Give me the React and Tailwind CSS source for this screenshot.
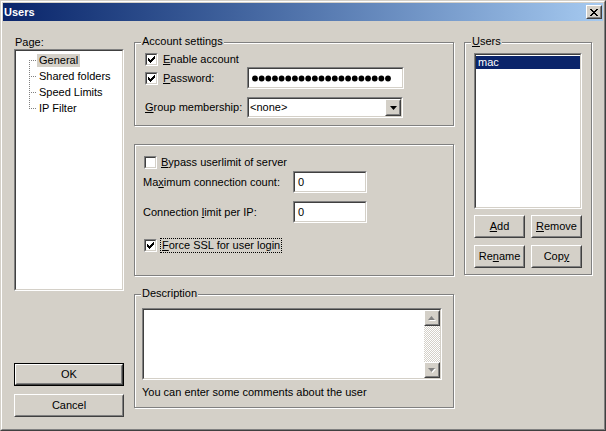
const face = "font-['Liberation_Sans',Arial,sans-serif]";

function Sunken({ className = "", innerClassName = "", children }) {
  return (
    <div className={`border border-t-[#808080] border-l-[#808080] border-b-white border-r-white ${className}`}>
      <div className={`h-full w-full border border-t-[#404040] border-l-[#404040] border-b-[#d4d0c8] border-r-[#d4d0c8] bg-white ${innerClassName}`}>
        {children}
      </div>
    </div>
  );
}

function Raised({ className = "", children }) {
  return (
    <div className={`border border-t-white border-l-white border-b-[#404040] border-r-[#404040] bg-[#d4d0c8] ${className}`}>
      <div className="flex h-full w-full items-center justify-center border border-t-[#d4d0c8] border-l-[#d4d0c8] border-b-[#808080] border-r-[#808080]">
        {children}
      </div>
    </div>
  );
}

function Button({ children, className = "", isDefault = false }) {
  if (isDefault) {
    return (
      <div className={`border border-black ${className}`}>
        <Raised className="h-full w-full">{children}</Raised>
      </div>
    );
  }
  return <Raised className={className}>{children}</Raised>;
}

function CheckMark() {
  const starts = [2, 3, 4, 3, 2, 1, 0];
  return (
    <svg width="7" height="7" viewBox="0 0 7 7" shapeRendering="crispEdges">
      {starts.map((y, x) => (
        <rect key={x} x={x} y={y} width="1" height="3" fill="#000" />
      ))}
    </svg>
  );
}

function Check({ checked }) {
  return (
    <span className="block h-[13px] w-[13px] shrink-0 border border-t-[#808080] border-l-[#808080] border-b-white border-r-white">
      <span className="flex h-full w-full items-center justify-center border border-t-[#404040] border-l-[#404040] border-b-[#d4d0c8] border-r-[#d4d0c8] bg-white">
        {checked && <CheckMark />}
      </span>
    </span>
  );
}

function Group({ label, className = "", children }) {
  return (
    <div className={`relative border border-[#808080] shadow-[1px_1px_0_#fff,inset_1px_1px_0_#fff] ${className}`}>
      {label && (
        <span className="absolute -top-[8px] left-[6px] bg-[#d4d0c8] px-px leading-[13px]">{label}</span>
      )}
      {children}
    </div>
  );
}

function Arrow({ dir = "down", disabled = false }) {
  const pts = dir === "down" ? "0,0 7,0 3.5,4" : "0,4 7,4 3.5,0";
  if (disabled) {
    return (
      <svg width="8" height="5" viewBox="0 0 8 5">
        <polygon points={pts} fill="#fff" transform="translate(1,1)" />
        <polygon points={pts} fill="#808080" />
      </svg>
    );
  }
  return (
    <svg width="7" height="4" viewBox="0 0 7 4">
      <polygon points={pts} fill="#000" />
    </svg>
  );
}

function TreeLines({ index, count }) {
  const dots = [];
  const y0 = index === 0 ? 8 : 0;
  const y1 = index === count - 1 ? 8 : 16;
  for (let y = y0; y <= y1 && y < 16; y += 2) dots.push([13, y]);
  for (let x = 15; x <= 20; x += 2) dots.push([x, 8]);
  return (
    <svg width="21" height="16" viewBox="0 0 21 16" shapeRendering="crispEdges" className="shrink-0">
      {dots.map(([x, y]) => (
        <rect key={`${x}-${y}`} x={x} y={y} width="1" height="1" fill="#808080" />
      ))}
    </svg>
  );
}

function CloseGlyph() {
  const rows = ["XX....XX", ".XX..XX.", "..XXXX..", "...XX...", "..XXXX..", ".XX..XX.", "XX....XX"];
  return (
    <svg width="8" height="7" viewBox="0 0 8 7" shapeRendering="crispEdges">
      {rows.flatMap((row, y) =>
        row.split("").map((c, x) => (c === "X" ? <rect key={`${x}-${y}`} x={x} y={y} width="1" height="1" fill="#000" /> : null))
      )}
    </svg>
  );
}

const pages = ["General", "Shared folders", "Speed Limits", "IP Filter"];

export default function App() {
  return (
    <div className={`h-[431px] w-[606px] border border-t-[#d4d0c8] border-l-[#d4d0c8] border-b-[#404040] border-r-[#404040] bg-[#d4d0c8] text-[11px] leading-[13px] text-black ${face}`}>
      <div className="flex h-full flex-col border border-t-white border-l-white border-b-[#808080] border-r-[#808080] p-px">
        {/* title bar */}
        <div className="flex h-[18px] shrink-0 items-center bg-gradient-to-r from-[#0a246a] to-[#a6caf0] pl-px pr-px">
          <span className="flex-1 font-bold text-white">Users</span>
          <Raised className="h-[14px] w-[16px]">
            <CloseGlyph />
          </Raised>
        </div>

        <div className="flex flex-1 gap-[10px] px-[11px] pb-[11px]">
          {/* left column */}
          <div className="flex w-[110px] flex-col">
            <div className="mt-[15px] h-[13px] pl-px">Page:</div>
            <Sunken className="h-[242px] w-[110px]" innerClassName="pt-px">
              {pages.map((p, i) => (
                <div key={p} className="flex h-[16px] items-center">
                  <TreeLines index={i} count={pages.length} />
                  <span className={`h-[13px] whitespace-nowrap px-[2px] ${i === 0 ? "bg-[#d4d0c8]" : ""}`}>{p}</span>
                </div>
              ))}
            </Sunken>
            <Button isDefault className="mt-auto h-[23px] w-[110px]">OK</Button>
            <Button className="mt-[8px] h-[23px] w-[110px]">Cancel</Button>
          </div>

          {/* middle column */}
          <div className="flex w-[320px] flex-col">
            <Group label="Account settings" className="mt-[21px] h-[84px] pl-[10px] pt-[8px]">
              <div className="flex h-[16px] items-center">
                <Check checked />
                <span className="ml-[5px]"><span className="underline">E</span>nable account</span>
              </div>
              <div className="flex h-[22px] items-center">
                <div className="flex w-[102px] items-center">
                  <Check checked />
                  <span className="ml-[5px]"><span className="underline">P</span>assword:</span>
                </div>
                <Sunken className="h-[22px] w-[157px]" innerClassName="flex items-center pl-[3px]">
                  <svg width="142" height="7" viewBox="0 0 142 7">
                    {Array.from({ length: 21 }).map((_, i) => (
                      <circle key={i} cx={3 + i * 6.65} cy="3.5" r="2.9" fill="#000" />
                    ))}
                  </svg>
                </Sunken>
              </div>
              <div className="mt-[8px] flex h-[21px] items-center">
                <span className="w-[102px]"><span className="underline">G</span>roup membership:</span>
                <Sunken className="h-[21px] w-[156px]" innerClassName="flex items-center">
                  <span className="flex-1 pl-px">&lt;none&gt;</span>
                  <Raised className="h-full w-[16px]">
                    <Arrow dir="down" />
                  </Raised>
                </Sunken>
              </div>
            </Group>

            <Group className="mt-[18px] h-[132px] pl-[8px] pt-[11px]">
              <div className="flex h-[13px] items-center pl-px">
                <Check />
                <span className="ml-[4px]"><span className="underline">B</span>ypass userlimit of server</span>
              </div>
              <div className="mt-[2px] flex h-[22px] items-center">
                <span className="w-[150px]">Ma<span className="underline">x</span>imum connection count:</span>
                <Sunken className="h-[22px] w-[74px]" innerClassName="flex items-center pl-[3px]">0</Sunken>
              </div>
              <div className="mt-[8px] flex h-[22px] items-center">
                <span className="w-[150px]">Connection <span className="underline">l</span>imit per IP:</span>
                <Sunken className="h-[22px] w-[74px]" innerClassName="flex items-center pl-[3px]">0</Sunken>
              </div>
              <div className="mt-[14px] flex h-[17px] items-center pl-px">
                <Check checked />
                <span className="ml-[3px] border border-dotted border-black px-px leading-[13px]">
                  <span className="underline">F</span>orce SSL for user login
                </span>
              </div>
            </Group>

            <Group label="Description" className="mt-[18px] h-[114px] pl-[7px] pt-[13px]">
              <Sunken className="h-[72px] w-[300px]" innerClassName="flex">
                <div className="flex-1" />
                <div className="flex w-[16px] flex-col">
                  <Raised className="h-[16px] w-[16px]">
                    <Arrow dir="up" disabled />
                  </Raised>
                  <div className="flex-1 bg-[repeating-conic-gradient(#d4d0c8_0%_25%,#ffffff_0%_50%)] bg-[length:2px_2px]" />
                  <Raised className="h-[16px] w-[16px]">
                    <Arrow dir="down" disabled />
                  </Raised>
                </div>
              </Sunken>
              <div className="mt-[6px] h-[13px]">You can enter some comments about the user</div>
            </Group>
          </div>

          {/* right column */}
          <div className="flex w-[128px] flex-col">
            <Group label={<><span className="underline">U</span>sers</>} className="mt-[21px] h-[233px] pl-[9px] pt-[10px]">
              <Sunken className="h-[156px] w-[108px]" innerClassName="pt-px">
                <div className="h-[13px] bg-[#0a246a] pl-[2px] text-white">mac</div>
              </Sunken>
              <div className="mt-[6px] flex gap-[6px]">
                <Button className="h-[23px] w-[51px]"><span><span className="underline">A</span>dd</span></Button>
                <Button className="h-[23px] w-[51px]"><span><span className="underline">R</span>emove</span></Button>
              </div>
              <div className="mt-[7px] flex gap-[6px]">
                <Button className="h-[23px] w-[51px]"><span>Re<span className="underline">n</span>ame</span></Button>
                <Button className="h-[23px] w-[51px]"><span>Cop<span className="underline">y</span></span></Button>
              </div>
            </Group>
          </div>
        </div>
      </div>
    </div>
  );
}
